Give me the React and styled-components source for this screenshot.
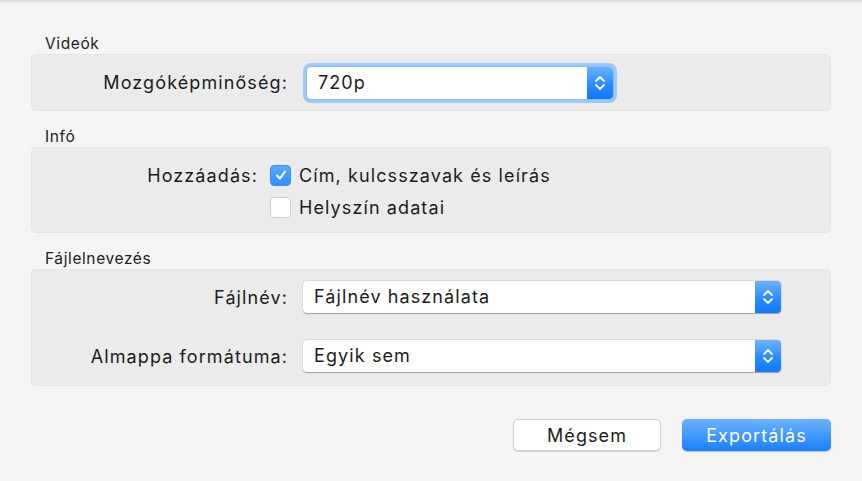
import React from "react";
import styled, { createGlobalStyle } from "styled-components";

const GlobalStyle = createGlobalStyle`
  html, body { margin: 0; padding: 0; }
  body {
    background: #f5f5f5;
    font-family: Inter, "Liberation Sans", sans-serif;
    color: #1f1f1f;
    -webkit-font-smoothing: antialiased;
  }
`;

export default function App() {
  return (
    <>
      <GlobalStyle />
      <Sheet>
        <SectionTitle>Videók</SectionTitle>
        <Group $pad="0" $h="57px">
          <FormRow $labelWidth="256px">
            <FieldLabel>Mozgóképminőség:</FieldLabel>
            <Select value="720p" width="306px" focused />
          </FormRow>
        </Group>

        <SectionTitle>Infó</SectionTitle>
        <Group $pad="11px 0 9px">
          <FormRow $labelWidth="226px" $gap="12px">
            <FieldLabel>Hozzáadás:</FieldLabel>
            <Check checked label="Cím, kulcsszavak és leírás" />
          </FormRow>
          <FormRow $labelWidth="226px" $gap="12px">
            <span />
            <Check label="Helyszín adatai" />
          </FormRow>
        </Group>

        <SectionTitle>Fájlelnevezés</SectionTitle>
        <Group $pad="11px 0 13px" $rowGap="27px">
          <FormRow $labelWidth="256px">
            <FieldLabel>Fájlnév:</FieldLabel>
            <Select value="Fájlnév használata" width="478px" />
          </FormRow>
          <FormRow $labelWidth="256px">
            <FieldLabel>Almappa formátuma:</FieldLabel>
            <Select value="Egyik sem" width="478px" />
          </FormRow>
        </Group>

        <Footer>
          <Button>Mégsem</Button>
          <Button $primary>Exportálás</Button>
        </Footer>
      </Sheet>
    </>
  );
}

const Select = ({ value, width, focused }) => (
  <SelectBox style={{ width }} $focused={focused}>
    <SelectValue>{value}</SelectValue>
    <Stepper>
      <svg width="12" height="20" viewBox="0 0 12 20" fill="none">
        <path d="M2 8 L6 4 L10 8" stroke="#fff" strokeWidth="1.8" strokeLinecap="round" strokeLinejoin="round" />
        <path d="M2 12 L6 16 L10 12" stroke="#fff" strokeWidth="1.8" strokeLinecap="round" strokeLinejoin="round" />
      </svg>
    </Stepper>
  </SelectBox>
);

const Check = ({ checked, label }) => (
  <CheckLine>
    <CheckBox $checked={checked}>
      {checked && (
        <svg width="14" height="14" viewBox="0 0 14 14" fill="none">
          <path d="M3 7.5 L6 10.5 L11 3.5" stroke="#fff" strokeWidth="2" strokeLinecap="round" strokeLinejoin="round" />
        </svg>
      )}
    </CheckBox>
    <CheckText>{label}</CheckText>
  </CheckLine>
);

const Sheet = styled.div`
  height: 481px;
  box-sizing: border-box;
  padding: 33px 31px 0;
  background: linear-gradient(#d6d6d6 0, #ececec 2px, #f5f5f5 5px, #f5f5f5 100%);
`;

const SectionTitle = styled.div`
  height: 21px;
  line-height: 21px;
  font-size: 15.5px;
  letter-spacing: 0.6px;
  padding-left: 14px;
  color: #222;
  margin-top: 15px;
  &:first-child { margin-top: 0; }
`;

const Group = styled.div`
  box-sizing: border-box;
  width: 800px;
  min-height: ${(p) => p.$h || "auto"};
  padding: ${(p) => p.$pad};
  background: #ebebeb;
  border: 1px solid #e5e5e5;
  border-radius: 5px;
  display: flex;
  flex-direction: column;
  justify-content: center;
  gap: ${(p) => p.$rowGap || "0"};
`;

const FormRow = styled.div`
  display: grid;
  grid-template-columns: ${(p) => p.$labelWidth} auto;
  column-gap: ${(p) => p.$gap || "15px"};
  align-items: center;
  min-height: 32px;
`;

const BodyText = `
  font-size: 18px;
  letter-spacing: 1.1px;
  color: #1c1c1c;
`;

const FieldLabel = styled.span`
  text-align: right;
  ${BodyText}
`;

const SelectBox = styled.div`
  display: flex;
  height: 32px;
  box-sizing: border-box;
  margin-left: ${(p) => (p.$focused ? "4px" : "0")};
  border-radius: 4px;
  background: #fff;
  box-shadow: ${(p) =>
    p.$focused
      ? "0 0 0 1px #8dbdf7, 0 0 0 4px #9fc8f7"
      : "0 0.5px 1px rgba(0,0,0,0.3), 0 0 0 0.5px rgba(0,0,0,0.08)"};
`;

const SelectValue = styled.div`
  flex: 1;
  padding-left: 11px;
  line-height: 32px;
  ${BodyText}
`;

const Stepper = styled.div`
  width: 26px;
  border-radius: 0 4px 4px 0;
  background: linear-gradient(#6cb2fb, #2b8bfc 55%, #0f78fb);
  display: flex;
  align-items: center;
  justify-content: center;
`;

const CheckLine = styled.label`
  display: flex;
  align-items: center;
  gap: 8px;
`;

const CheckBox = styled.span`
  width: 21px;
  height: 21px;
  box-sizing: border-box;
  border-radius: 4px;
  display: flex;
  align-items: center;
  justify-content: center;
  background: ${(p) => (p.$checked ? "linear-gradient(#5aa8fb, #2f8ff9)" : "#fff")};
  border: 1px solid ${(p) => (p.$checked ? "#3a8ef0" : "#cfcfcf")};
`;

const CheckText = styled.span`
  ${BodyText}
`;

const Footer = styled.div`
  width: 800px;
  margin-top: 33px;
  display: flex;
  justify-content: flex-end;
  gap: 21px;
`;

const Button = styled.button`
  width: ${(p) => (p.$primary ? "149px" : "148px")};
  height: 32px;
  border-radius: 5px;
  font-family: inherit;
  ${BodyText}
  color: ${(p) => (p.$primary ? "#fff" : "#1c1c1c")};
  cursor: pointer;
  border: ${(p) => (p.$primary ? "none" : "1px solid #d0d0d0")};
  background: ${(p) => (p.$primary ? "linear-gradient(#6cb2fb, #1a80fb)" : "#fff")};
  box-shadow: ${(p) => (p.$primary ? "0 0.5px 1px rgba(0,0,0,0.2)" : "0 0.5px 1px rgba(0,0,0,0.12)")};
`;
